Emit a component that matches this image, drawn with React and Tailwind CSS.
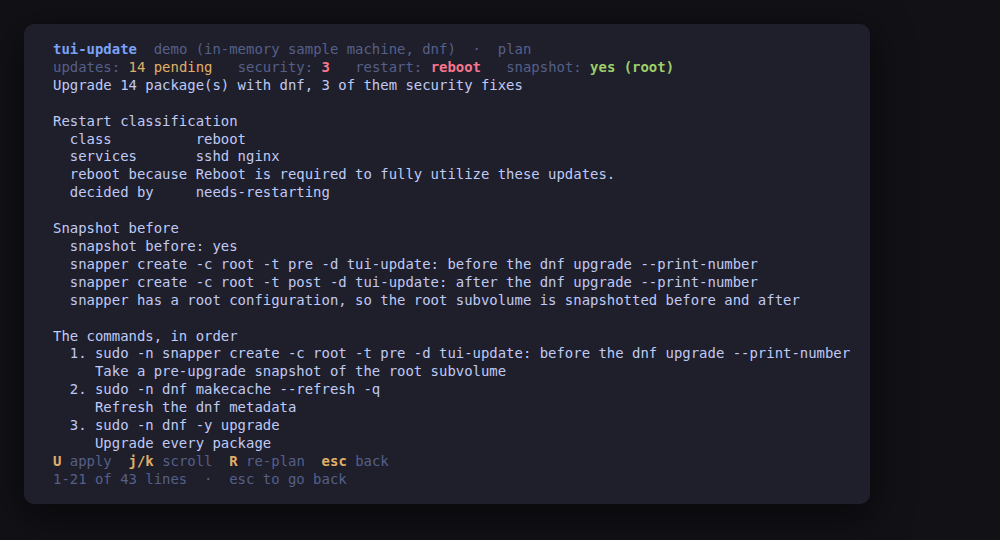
const DIM = 'text-[#565f89]'

function Line({ children }) {
  return <div className="h-[17.92px] whitespace-pre">{children || ' '}</div>
}

function Key({ k, label, last }) {
  return (
    <>
      <span className="font-bold text-[#e0af68]">{k}</span>
      <span className={DIM}>{' ' + label + (last ? '' : '  ')}</span>
    </>
  )
}

const RESTART = [
  ['class', 'reboot'],
  ['services', 'sshd nginx'],
  ['reboot because', 'Reboot is required to fully utilize these updates.'],
  ['decided by', 'needs-restarting'],
]

const SNAPSHOT = [
  'snapshot before: yes',
  'snapper create -c root -t pre -d tui-update: before the dnf upgrade --print-number',
  'snapper create -c root -t post -d tui-update: after the dnf upgrade --print-number',
  'snapper has a root configuration, so the root subvolume is snapshotted before and after',
]

const COMMANDS = [
  ['sudo -n snapper create -c root -t pre -d tui-update: before the dnf upgrade --print-number', 'Take a pre-upgrade snapshot of the root subvolume'],
  ['sudo -n dnf makecache --refresh -q', 'Refresh the dnf metadata'],
  ['sudo -n dnf -y upgrade', 'Upgrade every package'],
]

export default function App() {
  return (
    <div className="min-h-[540px] w-full bg-[#111116] p-6">
      <div className="w-[846px] rounded-[10px] bg-[#1e1f2b] pb-[15px] pl-[29px] pr-4 pt-[17px] text-[13.95px] leading-[17.92px] text-[#c0caf5] shadow-[0_10px_40px_rgba(0,0,0,0.55)]"
        style={{ fontFamily: '"DejaVu Sans Mono", monospace' }}>
        {/* header */}
        <Line>
          <span className="font-bold text-[#7aa2f7]">tui-update</span>
          <span className={DIM}>{'  demo (in-memory sample machine, dnf)  ·  plan'}</span>
        </Line>
        <Line>
          <span className={DIM}>updates: </span>
          <span className="text-[#e0af68]">14 pending</span>
          <span className={DIM}>{'   security: '}</span>
          <span className="font-bold text-[#f7768e]">3</span>
          <span className={DIM}>{'   restart: '}</span>
          <span className="font-bold text-[#f7768e]">reboot</span>
          <span className={DIM}>{'   snapshot: '}</span>
          <span className="font-bold text-[#9ece6a]">yes (root)</span>
        </Line>
        <Line>Upgrade 14 package(s) with dnf, 3 of them security fixes</Line>
        <Line />

        <Line>Restart classification</Line>
        {RESTART.map(([k, v]) => (
          <Line key={k}>{'  ' + k.padEnd(15, ' ') + v}</Line>
        ))}
        <Line />

        <Line>Snapshot before</Line>
        {SNAPSHOT.map((s) => (
          <Line key={s}>{'  ' + s}</Line>
        ))}
        <Line />

        <Line>The commands, in order</Line>
        {COMMANDS.map(([cmd, desc], i) => (
          <div key={cmd}>
            <Line>{`  ${i + 1}. ${cmd}`}</Line>
            <Line>{'     ' + desc}</Line>
          </div>
        ))}

        {/* footer */}
        <Line>
          <Key k="U" label="apply" />
          <Key k="j/k" label="scroll" />
          <Key k="R" label="re-plan" />
          <Key k="esc" label="back" last />
        </Line>
        <Line>
          <span className={DIM}>{'1-21 of 43 lines  ·  esc to go back'}</span>
        </Line>
      </div>
    </div>
  )
}
